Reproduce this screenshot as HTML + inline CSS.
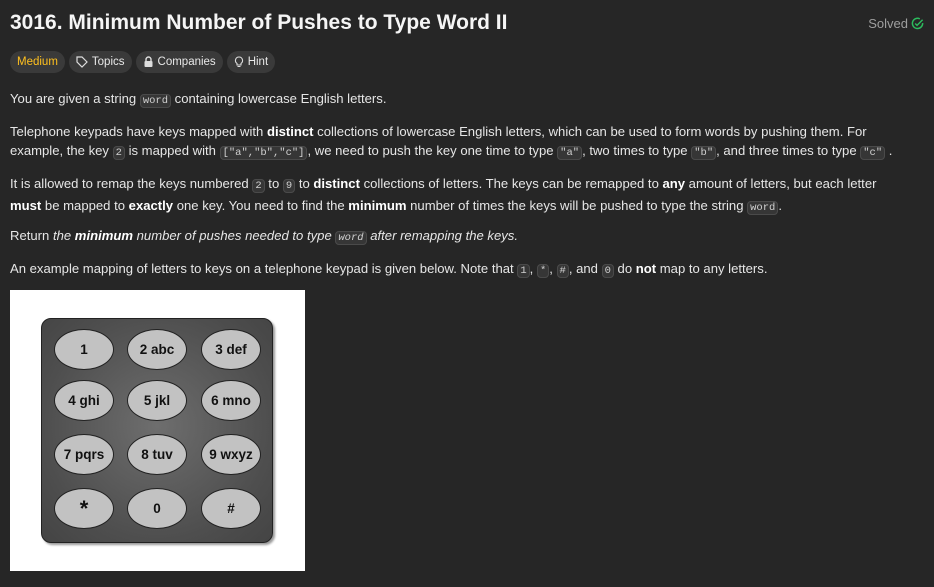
<!DOCTYPE html>
<html><head><meta charset="utf-8"><style>
*{margin:0;padding:0;box-sizing:border-box}
body{width:934px;height:587px;background:#262626;font-family:"Liberation Sans",sans-serif;color:#eff1f6;overflow:hidden;position:relative}
.t{position:absolute;left:10px;top:11px;font-size:21px;font-weight:bold;color:#f5f5f5}
.solved{position:absolute;right:10px;top:16px;font-size:13px;color:#9e9e9e;display:flex;align-items:center;gap:3px}
.tags{position:absolute;left:10px;top:51px;display:flex;gap:4px}
.tag{height:22px;border-radius:11px;background:#3a3a3a;font-size:11.5px;padding:0 7px;display:flex;align-items:center;gap:4px;color:#e8e8e8}
.p{position:absolute;left:10px;font-size:13.1px;line-height:19px;color:#e6e6e6;white-space:nowrap}
code{font-family:"Liberation Mono",monospace;font-size:10.5px;background:#363636;border:1px solid #4a4a4a;border-radius:4px;padding:0 2px;color:#d0d0d0}
b{color:#fff}
.img{position:absolute;left:10px;top:290px;width:295px;height:281px;background:#fff}
.pad{position:absolute;left:31px;top:28px;width:232px;height:225px;border-radius:10px;border:1px solid #222;background:radial-gradient(circle at 50% 48%,#6e6e6e,#4e4e4e 70%,#444);box-shadow:2px 2px 2px #999}
.k{position:absolute;width:60px;height:41px;border-radius:50%;background:#c2c2c2;border:1px solid #222;font-weight:bold;font-size:13.5px;color:#111;display:flex;align-items:center;justify-content:center}
</style></head><body>
<div class="t">3016. Minimum Number of Pushes to Type Word II</div>
<div class="solved">Solved <svg width="13" height="13" viewBox="0 0 14 14"><path d="M12.5 6.5A5.5 5.5 0 1 1 9.5 2" fill="none" stroke="#2cbb5d" stroke-width="1.6"/><path d="M4.5 7l2 2 6-6" fill="none" stroke="#2cbb5d" stroke-width="1.6"/></svg></div>
<div class="tags">
<div class="tag" style="color:#ffc01e">Medium</div>
<div class="tag"><svg width="12" height="12" viewBox="0 0 12 12"><path d="M1 1h5l5 5-5 5-5-5z" fill="none" stroke="#ddd" stroke-width="1.2"/></svg>Topics</div>
<div class="tag"><svg width="11" height="12" viewBox="0 0 11 12"><path d="M3 5V3.5a2.5 2.5 0 0 1 5 0V5" fill="none" stroke="#ddd" stroke-width="1.4"/><rect x="1.5" y="5" width="8" height="6" rx="1" fill="#ddd"/></svg>Companies</div>
<div class="tag"><svg width="10" height="12" viewBox="0 0 10 12"><path d="M5 1a3.5 3.5 0 0 0-2 6.4V9h4V7.4A3.5 3.5 0 0 0 5 1zM3.5 10.5h3" fill="none" stroke="#ddd" stroke-width="1.1"/></svg>Hint</div>
</div>
<div class="p" style="top:89px">You are given a string <code>word</code> containing lowercase English letters.</div>
<div class="p" style="top:122px">Telephone keypads have keys mapped with <b>distinct</b> collections of lowercase English letters, which can be used to form words by pushing them. For<br>example, the key <code>2</code> is mapped with <code>["a","b","c"]</code>, we need to push the key one time to type <code>"a"</code>, two times to type <code>"b"</code>, and three times to type <code>"c"</code> .</div>
<div class="p" style="top:174px">It is allowed to remap the keys numbered <code>2</code> to <code>9</code> to <b>distinct</b> collections of letters. The keys can be remapped to <b>any</b> amount of letters, but each letter<br><b>must</b> be mapped to <b>exactly</b> one key. You need to find the <b>minimum</b> number of times the keys will be pushed to type the string <code>word</code>.</div>
<div class="p" style="top:226px">Return <i>the <b>minimum</b> number of pushes needed to type <code>word</code> after remapping the keys.</i></div>
<div class="p" style="top:259px">An example mapping of letters to keys on a telephone keypad is given below. Note that <code>1</code>, <code>*</code>, <code>#</code>, and <code>0</code> do <b>not</b> map to any letters.</div>
<div class="img"><div class="pad">
<div class="k" style="left:12px;top:10px">1</div><div class="k" style="left:85px;top:10px">2 abc</div><div class="k" style="left:159px;top:10px">3 def</div>
<div class="k" style="left:12px;top:61px">4 ghi</div><div class="k" style="left:85px;top:61px">5 jkl</div><div class="k" style="left:159px;top:61px">6 mno</div>
<div class="k" style="left:12px;top:115px">7 pqrs</div><div class="k" style="left:85px;top:115px">8 tuv</div><div class="k" style="left:159px;top:115px">9 wxyz</div>
<div class="k" style="left:12px;top:169px;font-size:22px">*</div><div class="k" style="left:85px;top:169px">0</div><div class="k" style="left:159px;top:169px">#</div>
</div></div>
</body></html>
